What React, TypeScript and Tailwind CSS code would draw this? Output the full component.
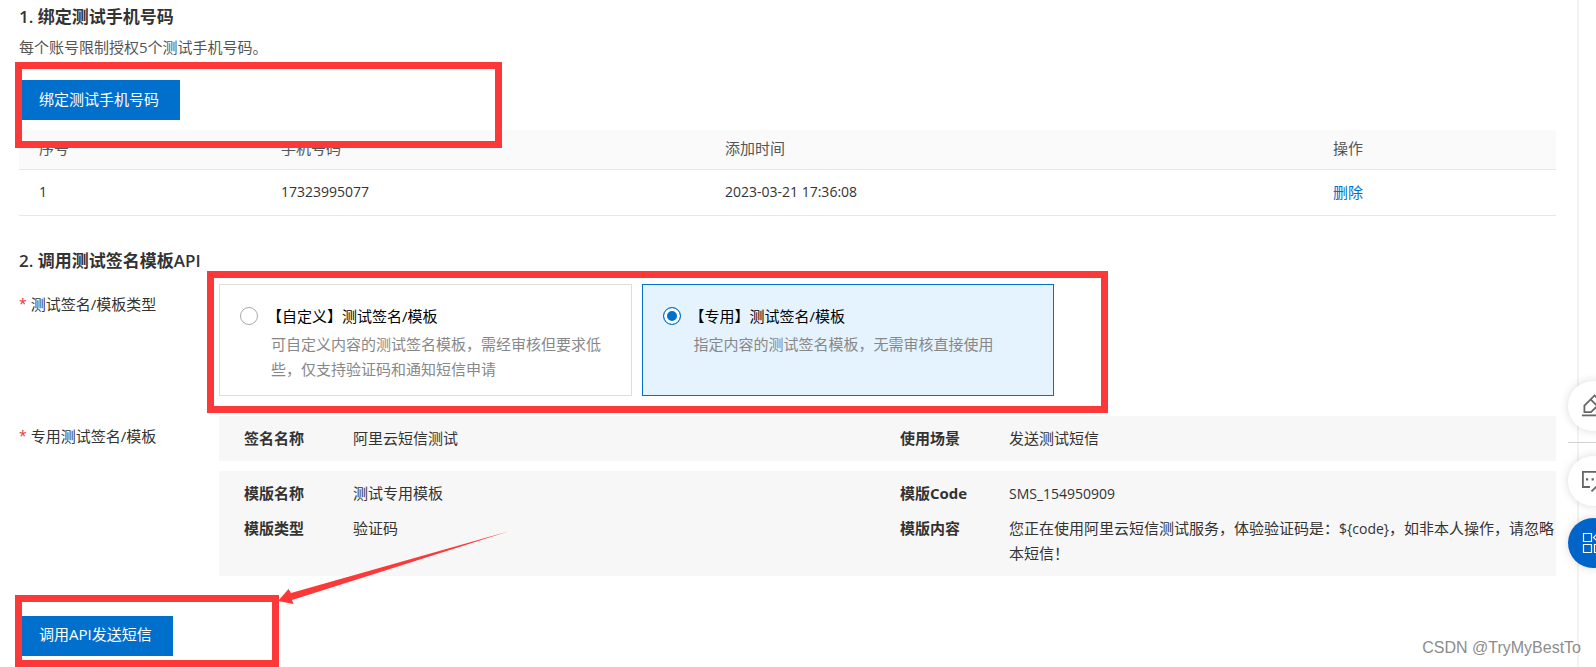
import React, { useState } from 'react';
import clsx from 'clsx';

interface SignOption {
  value: string;
  title: string;
  desc: string;
}

const columns = [
  { label: '序号', width: 'w-[242px]' },
  { label: '手机号码', width: 'w-[444px]' },
  { label: '添加时间', width: '' },
  { label: '操作', width: 'w-[243px]' },
];

const phones = [{ id: 1, phone: '17323995077', createdAt: '2023-03-21 17:36:08' }];

const options: SignOption[] = [
  {
    value: 'custom',
    title: '【自定义】测试签名/模板',
    desc: '可自定义内容的测试签名模板，需经审核但要求低些，仅支持验证码和通知短信申请',
  },
  {
    value: 'exclusive',
    title: '【专用】测试签名/模板',
    desc: '指定内容的测试签名模板，无需审核直接使用',
  },
];

const Marker: React.FC<{ className: string }> = ({ className }) => (
  <div className={clsx('absolute border-[7px] border-[#fc3838] pointer-events-none', className)} />
);

const PrimaryButton: React.FC<{ children: React.ReactNode }> = ({ children }) => (
  <button type="button" className="h-10 pl-5 pr-[21px] pb-0.5 bg-[#0070cc] text-white hover:bg-[#0064b8]">
    {children}
  </button>
);

const FieldLabel: React.FC<{ children: React.ReactNode }> = ({ children }) => (
  <div className="w-[200px] shrink-0 pt-2 leading-6 flex gap-1">
    <span className="text-[#e33] text-sm leading-6">*</span>
    <span>{children}</span>
  </div>
);

const Field: React.FC<{ label: string; children: React.ReactNode }> = ({ label, children }) => (
  <div className="flex leading-[25px]">
    <dt className="w-[109px] shrink-0 font-bold">{label}</dt>
    <dd className="flex-1">{children}</dd>
  </div>
);

const FloatingTools = () => (
  <div className="fixed right-0 top-[370px] w-10 h-[220px] overflow-hidden">
    <div className="ml-3 pt-[11px] flex flex-col w-[50px]">
      <button
        type="button"
        aria-label="编辑"
        className="w-[50px] h-[50px] rounded-full bg-white shadow-[0_0_10px_rgba(0,0,0,0.15)] flex items-center justify-center"
      >
        <svg width="24" height="24" viewBox="0 0 24 24" fill="none" stroke="#666" strokeWidth="1.8">
          <path d="M3.4 18.2V11.6L13.6 1.4l6.6 6.6L10 18.2z M9.6 5.4l6.6 6.6" />
          <path d="M1 21.4h22" />
        </svg>
      </button>
      <div className="mt-[11px] h-px bg-[#d0d0dc]" />
      <button
        type="button"
        aria-label="咨询"
        className="mt-[13px] w-[50px] h-[50px] rounded-full bg-white shadow-[0_0_10px_rgba(0,0,0,0.15)] flex items-center justify-center"
      >
        <svg width="24" height="24" viewBox="0 0 24 24" fill="none" stroke="#666" strokeWidth="1.8">
          <path d="M9 18H1.9V2.8h20.2V18h-7l-4.6 4.4" />
          <path d="M5 10.4h2.2M10.6 10.4h2.2M16.4 10.4h2.2" strokeWidth="2.2" />
        </svg>
      </button>
      <button
        type="button"
        aria-label="应用"
        className="mt-3 w-[50px] h-[50px] rounded-full bg-[#0064c8] shadow-[0_0_10px_rgba(0,0,0,0.15)] flex items-center justify-center"
      >
        <svg width="22" height="22" viewBox="0 0 22 22" fill="none" stroke="#fff" strokeWidth="1.2">
          <path d="M1.5 1.5h8v8h-8zM1.5 12.5h8v8h-8zM12.5 12.5h8v8h-8zM16.5 .5l5 5-5 5-5-5z" />
        </svg>
      </button>
    </div>
  </div>
);

const App: React.FC = () => {
  const [selected, setSelected] = useState('exclusive');

  return (
    <div className="relative min-h-screen overflow-hidden bg-white pr-[17px] text-[15px] text-[#333] font-['Open_Sans','Noto_Sans_CJK_SC',sans-serif]">
      <main className="min-h-screen pl-[19px] pr-[21px] pt-1 pb-[11px] border-r-2 border-[#f3f3f3]">
        <section>
          <h2 className="text-[17px] leading-[26px] font-semibold">
            1. <span className="font-bold">绑定测试手机号码</span>
          </h2>
          <p className="mt-[5px] leading-6 text-[#555]">每个账号限制授权5个测试手机号码。</p>
          <div className="relative mt-[21px]">
            <PrimaryButton>绑定测试手机号码</PrimaryButton>
            <Marker className="-left-1 -top-[18px] w-[487px] h-[86px]" />
          </div>
          <table className="mt-2.5 w-full table-fixed border-collapse text-left">
            <thead>
              <tr className="h-[39px] bg-[#fafafa] border-b border-[#e8e8e8] text-[#555]">
                {columns.map((col) => (
                  <th key={col.label} className={clsx('pl-5 pb-0.5 font-normal leading-6', col.width)}>
                    {col.label}
                  </th>
                ))}
              </tr>
            </thead>
            <tbody>
              {phones.map((row) => (
                <tr key={row.id} className="h-[46px] border-b border-[#e8e8e8]">
                  <td className="pl-5 text-sm">{row.id}</td>
                  <td className="pl-5 text-sm">{row.phone}</td>
                  <td className="pl-5 text-sm">{row.createdAt}</td>
                  <td className="pl-5">
                    <a href="#delete" className="text-[#0070cc]">删除</a>
                  </td>
                </tr>
              ))}
            </tbody>
          </table>
        </section>

        <section className="mt-8">
          <h2 className="text-[17px] leading-[26px] font-semibold">
            2. <span className="font-bold">调用测试签名模板</span>API
          </h2>

          <div className="mt-2.5 flex">
            <FieldLabel>测试签名/模板类型</FieldLabel>
            <div className="relative flex-1 max-w-[835px]">
              <div className="grid grid-cols-2 gap-2.5" role="radiogroup" aria-label="测试签名/模板类型">
                {options.map((opt) => (
                  <label
                    key={opt.value}
                    className={clsx(
                      'flex h-28 border px-5 pt-[19px] leading-[25px] cursor-pointer',
                      selected === opt.value ? 'border-[#0070cc] bg-[#e4f3fe]' : 'border-[#ddd] bg-white'
                    )}
                  >
                    <input
                      type="radio"
                      name="signType"
                      value={opt.value}
                      checked={selected === opt.value}
                      onChange={() => setSelected(opt.value)}
                      className="appearance-none mt-[3px] w-[18px] h-[18px] shrink-0 rounded-full border border-[#aaa] bg-white checked:border-[#0070cc] checked:bg-[#0070cc] checked:shadow-[inset_0_0_0_3px_#fff]"
                    />
                    <span className="ml-[13px] flex-1">
                      <span className="block -ml-1 text-black">{opt.title}</span>
                      <span className="block mt-[3px] text-[#888]">{opt.desc}</span>
                    </span>
                  </label>
                ))}
              </div>
              <Marker className="-left-3 -top-[13px] w-[901px] h-[142px]" />
            </div>
          </div>

          <div className="mt-5 flex">
            <FieldLabel>专用测试签名/模板</FieldLabel>
            <div className="flex-1 flex flex-col gap-2.5">
              <dl className="grid grid-cols-2 bg-[#f7f7f7] pl-[25px] py-2.5">
                <Field label="签名名称">阿里云短信测试</Field>
                <Field label="使用场景">发送测试短信</Field>
              </dl>
              <dl className="grid grid-cols-2 gap-y-2.5 bg-[#f7f7f7] pl-[25px] py-2.5">
                <Field label="模版名称">测试专用模板</Field>
                <Field label="模版Code"><span className="text-sm">SMS_154950909</span></Field>
                <Field label="模版类型">验证码</Field>
                <Field label="模版内容">
                  您正在使用阿里云短信测试服务，体验验证码是：<span className="text-sm">{'${code}'}</span>，如非本人操作，请忽略本短信！
                </Field>
              </dl>
            </div>
          </div>

          <div className="relative mt-10">
            <PrimaryButton>调用API发送短信</PrimaryButton>
            <Marker className="-left-1 -top-[21px] w-[264px] h-[72px]" />
            <svg
              className="absolute left-[259px] -top-[86px] pointer-events-none"
              width="234"
              height="76"
              viewBox="0 0 234 76"
              fill="#fc3838"
            >
              <path d="M0 71 L10.5 59 L13 63 L231 1.3 L14 70 L15.5 74 Z" />
            </svg>
          </div>
        </section>
      </main>

      <FloatingTools />

      <div className="absolute right-[15px] bottom-[7px] text-base leading-6 text-[#8c8c8c] font-['Liberation_Sans',sans-serif]">
        CSDN @TryMyBestTo
      </div>
    </div>
  );
};

export default App;
